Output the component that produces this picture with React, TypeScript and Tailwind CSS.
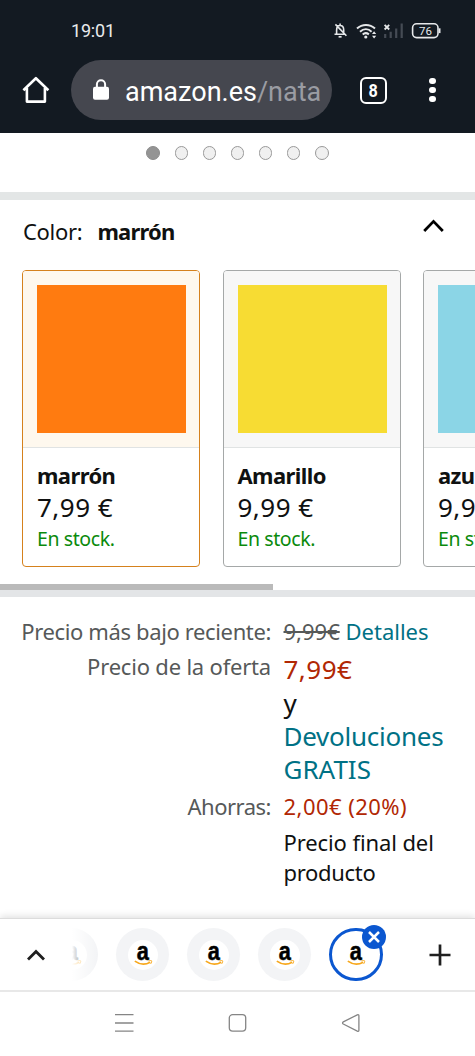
import clsx from 'clsx';

interface ColorOption {
  id: number;
  title: string;
  price: string;
  swatch: string;
}

const colors: ColorOption[] = [
  { id: 1, title: 'marrón', price: '7,99 €', swatch: 'bg-[#ff7b10]' },
  { id: 2, title: 'Amarillo', price: '9,99 €', swatch: 'bg-[#f7dc33]' },
  { id: 3, title: 'azul', price: '9,99 €', swatch: 'bg-[#8bd5e6]' },
];

function StatusIcons() {
  return (
    <svg width="110" height="22" viewBox="0 0 110 22" fill="none" stroke="#e6e8ea">
      {/* muted bell */}
      <path d="M2.5 15.3h11M4.6 15V11.2c0-3 1.3-4.7 3.5-4.7s3.6 1.7 3.6 4.5v3.4M8.1 6.3V4.4M3.4 5.4l11 11.4" strokeWidth="1.6" />
      <path d="M6.6 17.8h3" strokeWidth="1.7" />
      {/* wifi */}
      <path d="M25 9.6c5.2-4.8 12.8-4.8 18 0M28 12.7c3.6-3.2 8.2-3.2 11.6 0M30.7 15.4c2-1.7 4-1.7 6.2 0" strokeWidth="2" />
      <circle cx="33.8" cy="18" r="1.6" fill="#e6e8ea" stroke="none" />
      <path d="M40 15l2.1-2.7 2.1 2.7zM40 16.8h4.2l-2.1 2.7z" fill="#e6e8ea" stroke="none" />
      {/* no signal */}
      <path d="M52.6 5.9l4.6 4.6M57.2 5.9l-4.6 4.6" strokeWidth="1.8" />
      <path d="M53.2 19v-4M58.7 19v-6.2M64.2 19V9.5M69.7 19V4.5" stroke="#454b54" strokeWidth="2.2" />
      {/* battery */}
      <rect x="80.6" y="4.8" width="25.4" height="13.8" rx="4" strokeWidth="1.6" />
      <path d="M107.6 9.3v4.8" strokeWidth="1.8" />
      <text x="93.4" y="15.7" textAnchor="middle" fontSize="11.5" fill="#e6e8ea" stroke="none" fontFamily="Roboto, sans-serif">
        76
      </text>
    </svg>
  );
}

function Header() {
  return (
    <header className="h-[133px] bg-[#131a22] font-[Roboto,sans-serif]">
      <div className="flex h-15 items-center justify-between pr-[33px] pl-[71px]">
        <span className="pt-px text-[18px] leading-none tracking-[-0.2px] text-[#e9eaec]">19:01</span>
        <StatusIcons />
      </div>

      <div className="flex h-15 items-center">
        <svg className="ml-[22px]" width="28" height="30" viewBox="0 0 28 30" fill="none" stroke="white" strokeWidth="2.6" strokeLinejoin="round">
          <path d="M1.4 15.2 13.9 3.2 26.4 15.2M4.9 13v13.6h18V13" />
        </svg>
        <div className="ml-[21px] flex h-15 w-[261px] items-center rounded-full bg-[#45474f] pl-[22px]">
          <svg width="16" height="22" viewBox="0 0 16 22">
            <rect y="7.8" width="16" height="13" rx="2" fill="white" />
            <path d="M3.9 9V5.3a4.1 4.1 0 0 1 8.2 0V9" fill="none" stroke="white" strokeWidth="2" />
          </svg>
          <span className="ml-4 pt-1 text-[27px] leading-none text-white">
            amazon.es<span className="text-[#9a9ca3]">/nata</span>
          </span>
        </div>
        <div className="ml-7 flex h-[27px] w-[27px] items-center justify-center rounded-[6px] border-[2.5px] border-white text-[18px] font-bold text-white">
          <span className="scale-x-90">8</span>
        </div>
        <div className="ml-[42px] flex flex-col gap-[2.4px]">
          <i className="h-[6.6px] w-[6.6px] rounded-full bg-white" />
          <i className="h-[6.6px] w-[6.6px] rounded-full bg-white" />
          <i className="h-[6.6px] w-[6.6px] rounded-full bg-white" />
        </div>
      </div>
    </header>
  );
}

function ColorCard({ title, price, swatch, selected }: ColorOption & { selected: boolean }) {
  return (
    <div
      className={clsx(
        'h-[297px] w-[178px] shrink-0 overflow-hidden rounded-[4px] border',
        selected ? 'border-[#d5811d]' : 'border-[#a5a8a8]'
      )}>
      <div className={clsx('h-[177px] border-b border-[#e0e3e3] p-[14px]', selected ? 'bg-[#fef8ee]' : 'bg-[#f7f7f7]')}>
        <div className={clsx('h-[148px] w-[149px]', swatch)} />
      </div>
      <div className="pt-[11px] pl-[14px] whitespace-nowrap">
        <div className="text-[22px] leading-[32px] font-bold tracking-[-0.6px]">{title}</div>
        <div className="text-[26px] leading-[33px] tracking-[0.5px]">{price}</div>
        <div className="text-[19.5px] leading-[30px] tracking-[-0.4px] text-[#0a8a0c]">En stock.</div>
      </div>
    </div>
  );
}

function ColorPicker() {
  return (
    <section className="h-[390px] overflow-hidden">
      <div className="flex h-[70px] items-center justify-between pr-[31px] pl-[23px] text-[22px]">
        <div className="pb-[7px] tracking-[-0.3px]">
          Color:<b className="ml-[15px] tracking-[-0.8px]">marrón</b>
        </div>
        <svg className="mb-[18px]" width="21" height="14" viewBox="0 0 21 14" fill="none" stroke="black" strokeWidth="2.8">
          <path d="M1.2 12 10.5 2.4 19.8 12" />
        </svg>
      </div>
      <div className="flex gap-[22.5px] overflow-hidden pl-[22px]">
        {colors.map((color) => (
          <ColorCard key={color.id} {...color} selected={color.id === 1} />
        ))}
      </div>
      <div className="mt-[17px] h-[6px] w-[273px] bg-[#bababa]" />
    </section>
  );
}

function Prices() {
  return (
    <section className="grid grid-cols-[271px_1fr] gap-x-[12.5px] text-[22px] leading-[30px] whitespace-nowrap">
      <div className="pt-[19px] text-right tracking-[-0.37px] text-[#565959]">Precio más bajo reciente:</div>
      <div className="pt-[19px]">
        <span className="text-[#565959] line-through">9,99€</span> <span className="text-[#007185]">Detalles</span>
      </div>

      <div className="pt-[5px] text-right tracking-[-0.2px] text-[#565959]">Precio de la oferta</div>
      <div className="pt-[7px] text-[26px] leading-[33px]">
        <div className="tracking-[0.5px] text-[#b12704]">7,99€</div>
        <div className="pt-px">y</div>
        <div className="tracking-[-0.25px] text-[#007185]">Devoluciones</div>
        <div className="text-[#007185]">GRATIS</div>
      </div>

      <div className="pt-[5px] text-right tracking-[-0.5px] text-[#565959]">Ahorras:</div>
      <div className="pt-[5px]">
        <div className="tracking-[0.45px] text-[#b12704]">2,00€ (20%)</div>
        <div className="pt-[6px] tracking-[-0.1px]">Precio final del</div>
        <div className="tracking-[-0.3px]">producto</div>
      </div>
    </section>
  );
}

function AmazonIcon() {
  return (
    <svg width="30" height="30" viewBox="0 0 30 30" className="rounded-full bg-white">
      <text
        transform="translate(8.8 20.4) scale(0.87 1)"
        fontSize="25"
        fontWeight="bold"
        fontFamily="Liberation Sans, sans-serif"
        fill="black"
        stroke="black"
        strokeWidth="0.5">
        a
      </text>
      <path d="M6.8 21.2c5 3.5 10.8 3.6 15.4 1" fill="none" stroke="#f7a71b" strokeWidth="1.6" />
      <path d="M20.3 21c1.5-.5 2.8-.6 3.3-.2.3.6-.1 2-1 3.1" fill="none" stroke="#f7a71b" strokeWidth="1" />
    </svg>
  );
}

function TabStrip() {
  return (
    <div className="flex h-[72px] items-center border-t border-[#dcdcdc] bg-white shadow-[0_-2px_7px_rgba(0,0,0,0.12)]">
      <svg className="ml-[27px]" width="18" height="12" viewBox="0 0 18 12" fill="none" stroke="#1f1f1f" strokeWidth="2.8">
        <path d="M1 10.6 9 2.4l8 8.2" />
      </svg>
      <div className="relative ml-[27px] flex h-[53px] w-[26px] justify-end overflow-hidden">
        <div className="flex h-[53px] w-[53px] shrink-0 items-center justify-center rounded-full bg-[#f3f4f6]">
          <AmazonIcon />
        </div>
        <div className="absolute inset-0 bg-gradient-to-r from-white to-transparent" />
      </div>
      <div className="ml-[18px] flex items-center gap-[18px]">
        {[1, 2, 3].map((tab) => (
          <div key={tab} className="flex h-[53px] w-[53px] items-center justify-center rounded-full bg-[#f3f4f6]">
            <AmazonIcon />
          </div>
        ))}
        <div className="relative flex h-[53px] w-[54px] items-center justify-center rounded-full border-3 border-[#0b57d0]">
          <AmazonIcon />
          <span className="absolute -top-[6px] -right-[6px] flex h-[24px] w-[24px] items-center justify-center rounded-full bg-[#0b57d0]">
            <svg width="12" height="12" viewBox="0 0 12 12" stroke="white" strokeWidth="2.5">
              <path d="M1 1l10 10M11 1 1 11" />
            </svg>
          </span>
        </div>
      </div>
      <svg className="ml-[46px]" width="22" height="22" viewBox="0 0 22 22" stroke="#1f1f1f" strokeWidth="2.7">
        <path d="M11 .5v21M.5 11h21" />
      </svg>
    </div>
  );
}

function NavBar() {
  return (
    <nav className="flex h-[66px] items-center border-t-2 border-[#e8e8e8] bg-white pb-[2px] pl-[114px]">
      <svg width="248" height="20" viewBox="0 0 248 20" fill="none" stroke="#858585" strokeWidth="1.3">
        <path d="M1 1.6h18.5M1 10h18.5M1 18.2h18.5" />
        <rect x="115.3" y="1.6" width="16.4" height="16.6" rx="3.4" />
        <path d="m229.3 8.9 14-7.1c.9-.4 1.6 0 1.6.9v14.6c0 .9-.7 1.3-1.6.9L229.3 11c-1-.6-1-1.5 0-2.1z" />
      </svg>
    </nav>
  );
}

function App() {
  return (
    <div className="flex h-[1056px] w-[475px] flex-col overflow-hidden bg-white font-['Noto_Sans',sans-serif] text-[#0f1111]">
      <Header />
      <div className="flex h-[59px] justify-center gap-[14.6px] pt-[13px]">
        {[0, 1, 2, 3, 4, 5, 6].map((dot) => (
          <i
            key={dot}
            className={clsx('h-[13.5px] w-[13.5px] rounded-full border', dot === 0 ? 'border-[#8c8c8c] bg-[#949494]' : 'border-[#999] bg-[#f0f0f0]')}
          />
        ))}
      </div>
      <div className="h-2 shrink-0 bg-[#e3e6e6]" />
      <ColorPicker />
      <div className="h-[7px] shrink-0 bg-[#e3e5e7]" />
      <Prices />
      <div className="mt-auto">
        <TabStrip />
        <NavBar />
      </div>
    </div>
  );
}

export default App;
